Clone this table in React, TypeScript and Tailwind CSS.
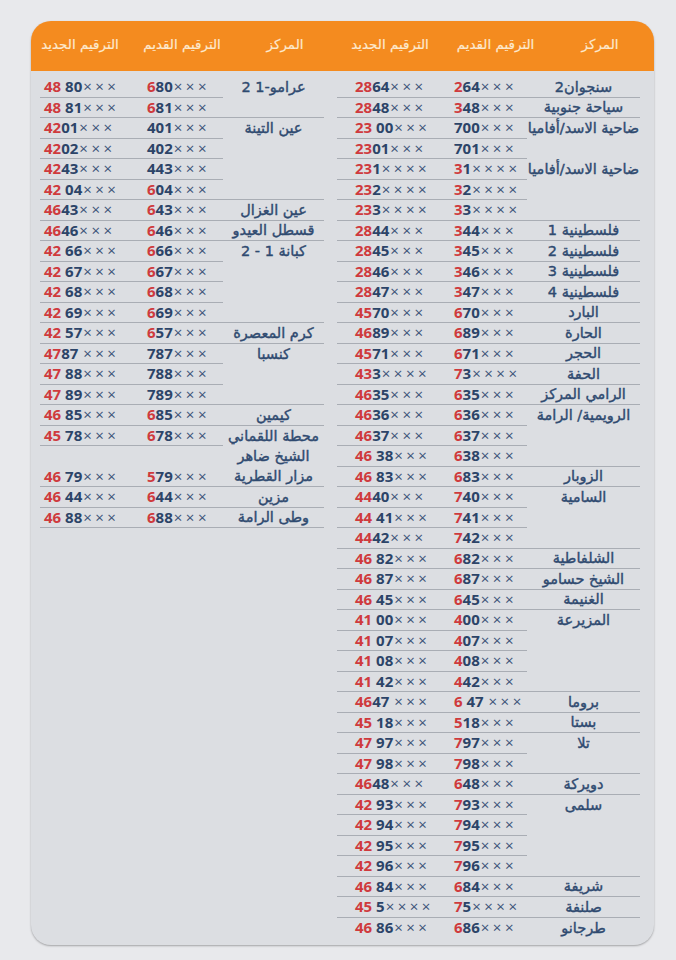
import React from "react";

type Row = [string, string, number, string, number];

const leftRows: Row[] = [
  ["عرامو-1 2", "680×××", 1, "48 80×××", 0],
  ["", "681×××", 1, "48 81×××", 1],
  ["عين التينة", "401×××", 0, "4201×××", 0],
  ["", "402×××", 0, "4202×××", 0],
  ["", "443×××", 0, "4243×××", 0],
  ["", "604×××", 1, "42 04×××", 1],
  ["عين الغزال", "643×××", 1, "4643×××", 1],
  ["قسطل العيدو", "646×××", 1, "4646×××", 1],
  ["كبانة 1 - 2", "666×××", 1, "42 66×××", 0],
  ["", "667×××", 1, "42 67×××", 0],
  ["", "668×××", 1, "42 68×××", 0],
  ["", "669×××", 1, "42 69×××", 1],
  ["كرم المعصرة", "657×××", 1, "42 57×××", 1],
  ["كنسبا", "787×××", 0, "4787 ×××", 0],
  ["", "788×××", 0, "47 88×××", 0],
  ["", "789×××", 0, "47 89×××", 1],
  ["كيمين", "685×××", 1, "46 85×××", 1],
  ["محطة اللقماني", "678×××", 1, "45 78×××", 0],
  ["الشيخ ضاهر", "", 0, "", 2],
  ["مزار القطرية", "579×××", 1, "46 79×××", 1],
  ["مزين", "644×××", 1, "46 44×××", 1],
  ["وطى الرامة", "688×××", 1, "46 88×××", 1],
];

const rightRows: Row[] = [
  ["سنجوان2", "264×××", 1, "2864×××", 1],
  ["سياحة جنوبية", "348×××", 1, "2848×××", 1],
  ["ضاحية الاسد/أفاميا", "700×××", 0, "23 00×××", 0],
  ["", "701×××", 0, "2301×××", 0],
  ["ضاحية الاسد/أفاميا", "31××××", 1, "231××××", 0],
  ["", "32××××", 1, "232××××", 0],
  ["", "33××××", 1, "233××××", 1],
  ["فلسطينية 1", "344×××", 1, "2844×××", 1],
  ["فلسطينية 2", "345×××", 1, "2845×××", 1],
  ["فلسطينية 3", "346×××", 1, "2846×××", 1],
  ["فلسطينية 4", "347×××", 1, "2847×××", 1],
  ["البارد", "670×××", 1, "4570×××", 1],
  ["الحارة", "689×××", 1, "4689×××", 1],
  ["الحجر", "671×××", 1, "4571×××", 1],
  ["الحفة", "73××××", 1, "433××××", 1],
  ["الرامي المركز", "635×××", 1, "4635×××", 1],
  ["الرويمية/ الرامة", "636×××", 1, "4636×××", 0],
  ["", "637×××", 1, "4637×××", 0],
  ["", "638×××", 1, "46 38×××", 1],
  ["الزوبار", "683×××", 1, "46 83×××", 1],
  ["السامية", "740×××", 1, "4440×××", 0],
  ["", "741×××", 1, "44 41×××", 0],
  ["", "742×××", 1, "4442×××", 1],
  ["الشلفاطية", "682×××", 1, "46 82×××", 1],
  ["الشيخ حسامو", "687×××", 1, "46 87×××", 1],
  ["الغنيمة", "645×××", 1, "46 45×××", 1],
  ["المزيرعة", "400×××", 1, "41 00×××", 0],
  ["", "407×××", 1, "41 07×××", 0],
  ["", "408×××", 1, "41 08×××", 0],
  ["", "442×××", 1, "41 42×××", 1],
  ["بروما", "6 47 ×××", 1, "4647 ×××", 1],
  ["بستا", "518×××", 1, "45 18×××", 1],
  ["تلا", "797×××", 1, "47 97×××", 0],
  ["", "798×××", 1, "47 98×××", 1],
  ["دويركة", "648×××", 1, "4648×××", 1],
  ["سلمى", "793×××", 1, "42 93×××", 0],
  ["", "794×××", 1, "42 94×××", 0],
  ["", "795×××", 1, "42 95×××", 0],
  ["", "796×××", 1, "42 96×××", 1],
  ["شريفة", "684×××", 1, "46 84×××", 1],
  ["صلنفة", "75××××", 1, "45 5××××", 1],
  ["طرجانو", "686×××", 1, "46 86×××", 3],
];

function Num({ t, r }: { t: string; r: number }) {
  const red = t.slice(0, r);
  const rest = t.slice(r);
  const parts: { s: string; x: boolean }[] = [];
  for (const ch of rest) {
    const x = ch === "×";
    const last = parts[parts.length - 1];
    if (last && last.x === x) last.s += ch;
    else parts.push({ s: ch, x });
  }
  return (
    <div dir="ltr" className="flex flex-row items-center whitespace-pre font-['Open_Sans',sans-serif] text-[15px] font-bold leading-none">
      {red && <span className="text-[#cf3a3d]">{red}</span>}
      {parts.map((p, i) =>
        p.x ? (
          <span key={i} className="pl-[1px] font-normal tracking-[3.5px] text-[#3b5378]">
            {p.s}
          </span>
        ) : (
          <span key={i} className="text-[#2c4468]">
            {p.s}
          </span>
        )
      )}
    </div>
  );
}

function Table({
  rows,
  wNew,
  wOld,
  wName,
  pNew,
  pOld,
}: {
  rows: Row[];
  wNew: string;
  wOld: string;
  wName: string;
  pNew: string;
  pOld: string;
}) {
  return (
    <div className="flex flex-col">
      {rows.map(([name, old, oldRed, nw, line], i) => {
        const numLine = line === 0 || line === 1;
        const nameLine = line === 1;
        return (
          <div key={i} className="flex h-[20.5px]">
            <div
              className={`${wNew} ${pNew} flex items-center ${numLine ? "border-b border-[#a9adb4]" : ""}`}
            >
              {nw && <Num t={nw} r={2} />}
            </div>
            <div
              className={`${wOld} ${pOld} flex items-center ${numLine ? "border-b border-[#a9adb4]" : ""}`}
            >
              {old && <Num t={old} r={oldRed} />}
            </div>
            <div
              className={`${wName} flex items-center justify-center ${nameLine ? "border-b border-[#a9adb4]" : ""}`}
            >
              {name && (
                <span
                  dir="rtl"
                  className="whitespace-nowrap font-['DejaVu_Sans',sans-serif] text-[14.5px] leading-none text-[#2f4a70] [-webkit-text-stroke:0.4px_#2f4a70]"
                >
                  {name}
                </span>
              )}
            </div>
          </div>
        );
      })}
    </div>
  );
}

function H({ w, children }: { w: string; children: React.ReactNode }) {
  return (
    <div className={`${w} flex items-center justify-center`}>
      <span dir="rtl" className="whitespace-nowrap font-['DejaVu_Sans',sans-serif] text-[13.5px] text-[#fde9cf] [-webkit-text-stroke:0.2px_#fde9cf]">
        {children}
      </span>
    </div>
  );
}

export default function App() {
  return (
    <div className="w-[676px] h-[960px] bg-[#e8e9ec] pt-[21px] pl-[31px] overflow-hidden">
      <div className="w-[623px] h-[924px] rounded-[20px] overflow-hidden bg-[#dcdee2] shadow-[0_1px_2px_rgba(0,0,0,0.3)] flex flex-col">
        <div className="h-[50px] shrink-0 bg-[#f48b1f] flex pb-[4px]">
          <H w="w-[98px]">الترقيم الجديد</H>
          <H w="w-[106px]">الترقيم القديم</H>
          <H w="w-[100px]">المركز</H>
          <H w="w-[110px]">الترقيم الجديد</H>
          <H w="w-[101px]">الترقيم القديم</H>
          <H w="w-[108px]">المركز</H>
        </div>
        <div className="flex pt-[6px] pl-[9px] gap-[13px]">
          <Table rows={leftRows} wNew="w-[100px]" wOld="w-[83px]" wName="w-[101px]" pNew="pl-[4px]" pOld="pl-[7px]" />
          <Table rows={rightRows} wNew="w-[103px]" wOld="w-[87px]" wName="w-[113px]" pNew="pl-[18px]" pOld="pl-[14px]" />
        </div>
      </div>
    </div>
  );
}
